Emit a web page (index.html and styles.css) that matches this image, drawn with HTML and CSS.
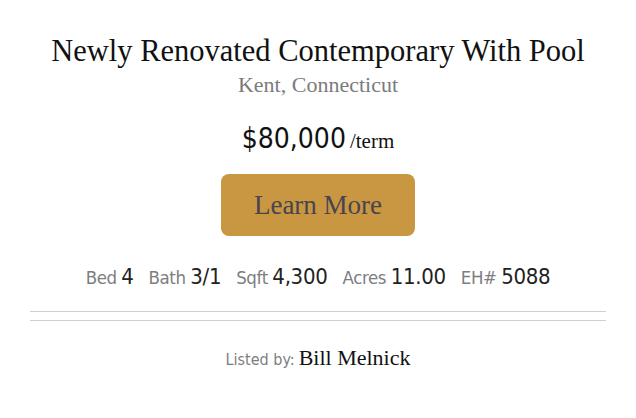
FILE: index.html
```html
<!DOCTYPE html>
<html>
<head>
<meta charset="utf-8">
<link rel="stylesheet" href="styles.css">
</head>
<body>
<div class="card">
  <h1 class="title">Newly Renovated Contemporary With Pool</h1>
  <div class="location">Kent, Connecticut</div>
  <div class="price"><span class="amount">$80,000</span> <span class="term">/term</span></div>
  <a class="btn" href="#">Learn More</a>
  <div class="stats">
    <span class="stat"><span class="lbl">Bed</span> <span class="val">4</span></span>
    <span class="stat"><span class="lbl">Bath</span> <span class="val">3/1</span></span>
    <span class="stat"><span class="lbl">Sqft</span> <span class="val">4,300</span></span>
    <span class="stat"><span class="lbl">Acres</span> <span class="val">11.00</span></span>
    <span class="stat"><span class="lbl">EH#</span> <span class="val">5088</span></span>
  </div>
  <div class="rule"></div>
  <div class="rule rule2"></div>
  <div class="agent"><span class="lbl-sm">Listed by:</span> <span class="name">Bill Melnick</span></div>
</div>
</body>
</html>
```
FILE: styles.css
```css
html, body { margin: 0; padding: 0; background: #fff; }
.card {
  width: 576px;
  margin: 0 30px;
  padding-top: 33px;
  display: flex;
  flex-direction: column;
  align-items: center;
  font-family: "Liberation Serif", serif;
}
.title {
  margin: 0;
  font-weight: normal;
  font-size: 30.5px;
  line-height: 36px;
  color: #111;
}
.location {
  font-size: 22px;
  line-height: 26px;
  color: #7b7b7b;
  margin-top: 3px;
}
.price {
  margin-top: 21px;
  line-height: 40px;
  color: #111;
  white-space: nowrap;
}
.amount {
  font-family: "DejaVu Sans Condensed", sans-serif;
  font-stretch: condensed;
  font-size: 28px;
}
.term { font-size: 21px; }
.btn {
  margin-top: 11px;
  width: 194px;
  height: 62px;
  box-sizing: border-box;
  border-radius: 8px;
  background: #c99641;
  color: #474450;
  font-size: 27px;
  text-decoration: none;
  display: flex;
  align-items: center;
  justify-content: center;
}
.stats {
  margin-top: 24px;
  display: flex;
  gap: 15px;
  font-family: "DejaVu Sans Condensed", sans-serif;
  font-stretch: condensed;
  line-height: 34px;
  white-space: nowrap;
}
.lbl { color: #7d7d82; font-size: 18.5px; letter-spacing: -0.4px; }
.val { color: #222; font-size: 22px; letter-spacing: -0.3px; }
.rule {
  align-self: stretch;
  height: 1px;
  background: #cfcfd2;
  margin-top: 15px;
}
.rule2 { margin-top: 8px; }
.agent {
  margin-top: 22px;
  line-height: 30px;
  white-space: nowrap;
}
.lbl-sm {
  font-family: "DejaVu Sans Condensed", sans-serif;
  font-stretch: condensed;
  color: #7d7d82;
  font-size: 16px;
}
.name { font-size: 22px; color: #111; }
```
